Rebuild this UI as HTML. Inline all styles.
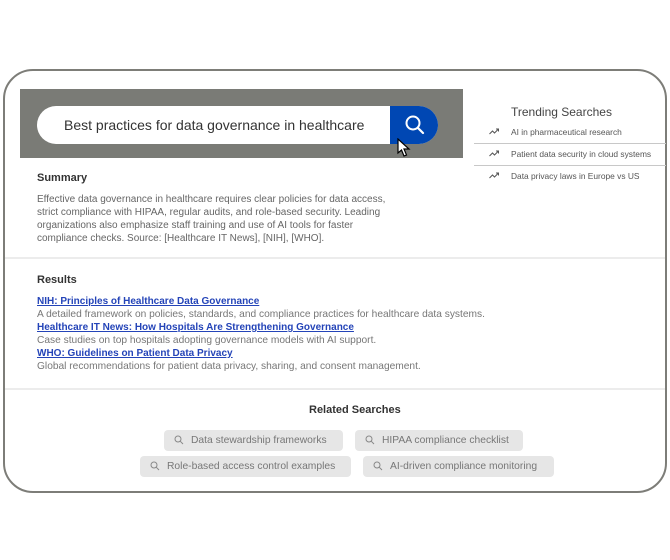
<!DOCTYPE html>
<html><head><meta charset="utf-8"><style>
*{margin:0;padding:0;box-sizing:border-box}
body{width:670px;height:560px;background:#fff;position:relative;font-family:"Liberation Sans",sans-serif;overflow:hidden}
.a{position:absolute;white-space:nowrap}
.card{position:absolute;left:3px;top:69px;width:664px;height:424px;border:2px solid #7d7d78;border-radius:30px;background:#fff}
.band{position:absolute;left:20px;top:89px;width:443px;height:69px;background:#7a7b76}
.inp{position:absolute;left:37px;top:106px;width:401px;height:38px;background:#fff;border-radius:19px}
.btn{position:absolute;left:390px;top:106px;width:48px;height:38px;background:#0047b3;border-radius:0 19px 19px 0}
.sep{position:absolute;left:5px;width:660px;height:2px;background:#ececec}
.h{font-weight:bold;color:#333;font-size:11px}
.p{color:#666;font-size:10px;line-height:13px}
.l{color:#2444b8;text-decoration:underline;font-size:10px;font-weight:bold}
.d{color:#777;font-size:10.2px}
.chip{position:absolute;height:21px;background:#e6e6e6;border-radius:4px;color:#777;font-size:10.3px;line-height:21px;padding-left:27px}
.chip svg{position:absolute;left:10px;top:5px}
.t{color:#555;font-size:8.4px}
.ts{position:absolute;left:474px;width:192px;height:1px;background:#c8c8c8}
</style></head><body>
<div class="card"></div>
<div class="band"></div>
<div class="inp"></div>
<div class="a" style="left:64px;top:117px;font-size:14px;color:#333">Best practices for data governance in healthcare</div>
<div class="btn"></div>
<svg class="a" style="left:404px;top:114px" width="22" height="22" viewBox="0 0 22 22"><circle cx="9" cy="9" r="6.5" fill="none" stroke="#fff" stroke-width="2"/><line x1="14" y1="14" x2="19" y2="19" stroke="#fff" stroke-width="2.2" stroke-linecap="round"/></svg>
<svg class="a" style="left:397px;top:138px" width="14" height="20" viewBox="0 0 14 20"><path d="M1 1 L1 15 L4.5 12 L7 18 L9.5 17 L7 11 L12 11 Z" fill="#fff" stroke="#000" stroke-width="1.2"/></svg>

<div class="a h" style="left:37px;top:172px">Summary</div>
<div class="a p" style="left:37px;top:193px">Effective data governance in healthcare requires clear policies for data access,<br>strict compliance with HIPAA, regular audits, and role-based security. Leading<br>organizations also emphasize staff training and use of AI tools for faster<br>compliance checks. Source: [Healthcare IT News], [NIH], [WHO].</div>
<div class="sep" style="top:257px"></div>

<div class="a h" style="left:37px;top:274px">Results</div>
<div class="a l" style="left:37px;top:296px">NIH: Principles of Healthcare Data Governance</div>
<div class="a d" style="left:37px;top:309px">A detailed framework on policies, standards, and compliance practices for healthcare data systems.</div>
<div class="a l" style="left:37px;top:322px">Healthcare IT News: How Hospitals Are Strengthening Governance</div>
<div class="a d" style="left:37px;top:335px">Case studies on top hospitals adopting governance models with AI support.</div>
<div class="a l" style="left:37px;top:348px">WHO: Guidelines on Patient Data Privacy</div>
<div class="a d" style="left:37px;top:361px">Global recommendations for patient data privacy, sharing, and consent management.</div>
<div class="sep" style="top:388px"></div>

<div class="a h" style="left:309px;top:404px;font-size:11px">Related Searches</div>
<div class="chip" style="left:164px;top:430px;width:179px">Data stewardship frameworks<svg width="10" height="10" viewBox="0 0 10 10"><circle cx="4" cy="4" r="3" fill="none" stroke="#888" stroke-width="1"/><line x1="6.2" y1="6.2" x2="9" y2="9" stroke="#888"/></svg></div>
<div class="chip" style="left:355px;top:430px;width:168px">HIPAA compliance checklist<svg width="10" height="10" viewBox="0 0 10 10"><circle cx="4" cy="4" r="3" fill="none" stroke="#888" stroke-width="1"/><line x1="6.2" y1="6.2" x2="9" y2="9" stroke="#888"/></svg></div>
<div class="chip" style="left:140px;top:456px;width:211px">Role-based access control examples<svg width="10" height="10" viewBox="0 0 10 10"><circle cx="4" cy="4" r="3" fill="none" stroke="#888" stroke-width="1"/><line x1="6.2" y1="6.2" x2="9" y2="9" stroke="#888"/></svg></div>
<div class="chip" style="left:363px;top:456px;width:191px">AI-driven compliance monitoring<svg width="10" height="10" viewBox="0 0 10 10"><circle cx="4" cy="4" r="3" fill="none" stroke="#888" stroke-width="1"/><line x1="6.2" y1="6.2" x2="9" y2="9" stroke="#888"/></svg></div>

<div class="a" style="left:511px;top:105px;font-size:12px;color:#444">Trending Searches</div>
<svg class="a" style="left:489px;top:128px" width="11" height="7" viewBox="0 0 11 7"><path d="M0.5 6 L3.5 3 L5.5 5 L9.5 1 M7 1 H9.5 V3.5" fill="none" stroke="#555" stroke-width="1"/></svg>
<div class="a t" style="left:511px;top:127px">AI in pharmaceutical research</div>
<div class="ts" style="top:143px"></div>
<svg class="a" style="left:489px;top:150px" width="11" height="7" viewBox="0 0 11 7"><path d="M0.5 6 L3.5 3 L5.5 5 L9.5 1 M7 1 H9.5 V3.5" fill="none" stroke="#555" stroke-width="1"/></svg>
<div class="a t" style="left:511px;top:149px">Patient data security in cloud systems</div>
<div class="ts" style="top:165px"></div>
<svg class="a" style="left:489px;top:172px" width="11" height="7" viewBox="0 0 11 7"><path d="M0.5 6 L3.5 3 L5.5 5 L9.5 1 M7 1 H9.5 V3.5" fill="none" stroke="#555" stroke-width="1"/></svg>
<div class="a t" style="left:511px;top:171px">Data privacy laws in Europe vs US</div>
</body></html>
